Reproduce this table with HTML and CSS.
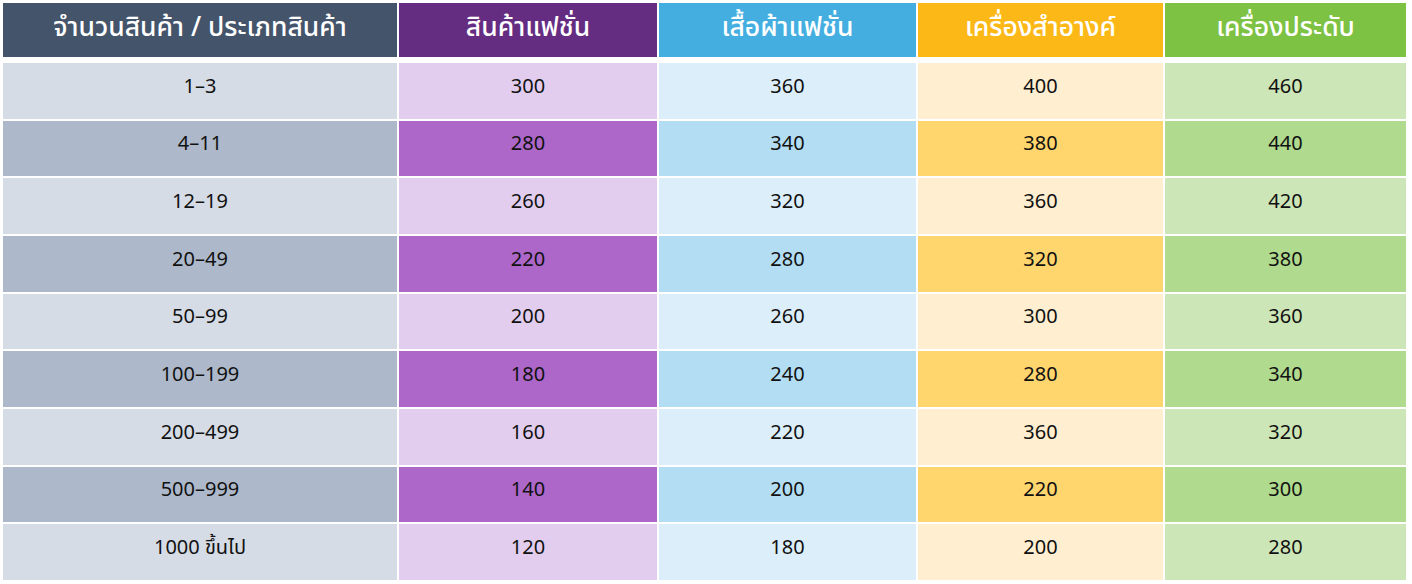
FILE: index.html
```html
<!DOCTYPE html>
<html lang="th">
<head>
<meta charset="utf-8">
<title>ราคาสินค้า</title>
<link rel="stylesheet" href="styles.css">
</head>
<body>
<div class="table">
  <div class="cell h c1">จำนวนสินค้า / ประเภทสินค้า</div>
  <div class="cell h c2">สินค้าแฟชั่น</div>
  <div class="cell h c3">เสื้อผ้าแฟชั่น</div>
  <div class="cell h c4">เครื่องสำอางค์</div>
  <div class="cell h c5">เครื่องประดับ</div>

  <div class="cell odd c1">1–3</div><div class="cell odd c2">300</div><div class="cell odd c3">360</div><div class="cell odd c4">400</div><div class="cell odd c5">460</div>
  <div class="cell even c1">4–11</div><div class="cell even c2">280</div><div class="cell even c3">340</div><div class="cell even c4">380</div><div class="cell even c5">440</div>
  <div class="cell odd c1">12–19</div><div class="cell odd c2">260</div><div class="cell odd c3">320</div><div class="cell odd c4">360</div><div class="cell odd c5">420</div>
  <div class="cell even c1">20–49</div><div class="cell even c2">220</div><div class="cell even c3">280</div><div class="cell even c4">320</div><div class="cell even c5">380</div>
  <div class="cell odd c1">50–99</div><div class="cell odd c2">200</div><div class="cell odd c3">260</div><div class="cell odd c4">300</div><div class="cell odd c5">360</div>
  <div class="cell even c1">100–199</div><div class="cell even c2">180</div><div class="cell even c3">240</div><div class="cell even c4">280</div><div class="cell even c5">340</div>
  <div class="cell odd c1">200–499</div><div class="cell odd c2">160</div><div class="cell odd c3">220</div><div class="cell odd c4">360</div><div class="cell odd c5">320</div>
  <div class="cell even c1">500–999</div><div class="cell even c2">140</div><div class="cell even c3">200</div><div class="cell even c4">220</div><div class="cell even c5">300</div>
  <div class="cell odd c1">1000 ขึ้นไป</div><div class="cell odd c2">120</div><div class="cell odd c3">180</div><div class="cell odd c4">200</div><div class="cell odd c5">280</div>
</div>
</body>
</html>
```
FILE: styles.css
```css
html, body {
  margin: 0;
  padding: 0;
  background: #ffffff;
}
body {
  padding: 3px 0 0 3px;
  font-family: "Noto Sans Thai", "Noto Sans", "Open Sans", sans-serif;
}
.table {
  display: grid;
  width: 1403px;
  grid-template-columns: 394px 258px 257px 245px 241px;
  grid-template-rows: 58px repeat(9, 55.67px);
  column-gap: 2px;
  row-gap: 2px;
}
.cell {
  display: flex;
  align-items: center;
  justify-content: center;
  font-size: 20px;
  color: #111111;
  white-space: nowrap;
  padding-bottom: 8px;
}
.h {
  color: #ffffff;
  font-size: 26.5px;
  font-weight: 500;
  margin-bottom: 4px;
  padding-bottom: 4px;
}
.h.c1 { background: #44546a; }
.h.c2 { background: #652d82; }
.h.c3 { background: #45aee1; }
.h.c4 { background: #fcb817; }
.h.c5 { background: #7dc243; }

.odd.c1 { background: #d6dce5; }
.odd.c2 { background: #e2cdee; }
.odd.c3 { background: #dbeef9; }
.odd.c4 { background: #ffefd0; }
.odd.c5 { background: #cde6b7; }

.even.c1 { background: #adb9ca; }
.even.c2 { background: #ac67c9; }
.even.c3 { background: #b3ddf3; }
.even.c4 { background: #ffd56e; }
.even.c5 { background: #b0da8d; }
```
